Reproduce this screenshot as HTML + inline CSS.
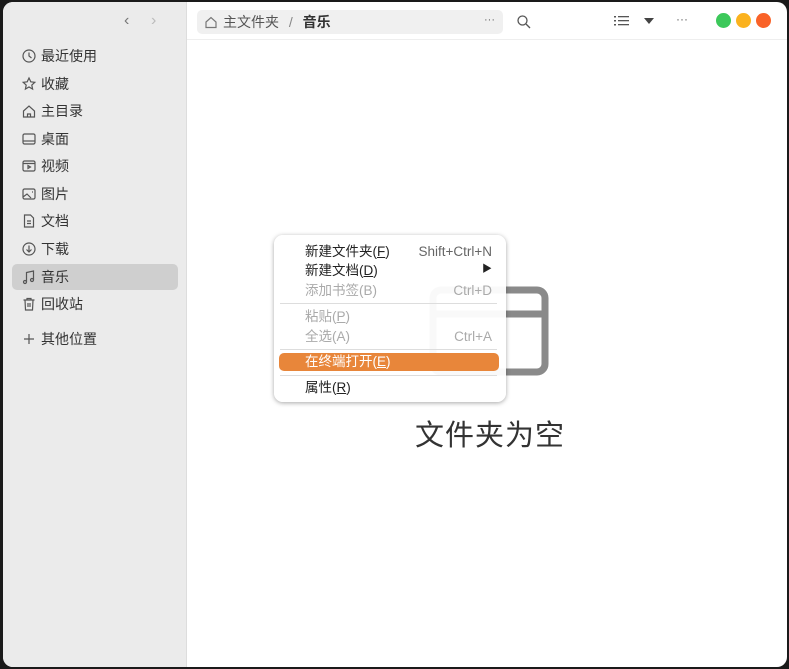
<!DOCTYPE html>
<html><head><meta charset="utf-8"><style>
*{margin:0;padding:0;box-sizing:border-box}
body{width:789px;height:669px;background:#1a1a1a;overflow:hidden;font-family:"Liberation Sans","Noto Sans CJK SC",sans-serif;position:relative}
.win{position:absolute;left:3px;top:2px;width:784px;height:665px;background:#fff;border-radius:10px;overflow:hidden}
.side{position:absolute;left:0;top:0;width:184px;height:100%;background:#ebebeb;border-right:1px solid #ddd}
.item{position:absolute;left:9px;width:166px;height:26px;font-size:14px;color:#333;line-height:26px;padding-left:29px}
.item.sel{background:#cfcfcf;border-radius:5px}
.item svg{position:absolute;left:9px;top:5px}
.top{position:absolute;left:184px;top:0;right:0;height:38px;border-bottom:1px solid #eee}
.crumb{position:absolute;left:10px;top:8px;width:306px;height:24px;background:#f0f0f0;border-radius:5px;font-size:14px;color:#555;line-height:24px;padding-left:26px}
.dot{position:absolute;top:11px;width:15px;height:15px;border-radius:50%}
.menu{position:absolute;left:271px;top:233px;width:232px;height:167px;background:rgba(255,255,255,.95);border-radius:9px;box-shadow:0 1px 5px rgba(0,0,0,.35);font-size:13.5px;color:#222}
.m{position:absolute;left:31px;line-height:18px}
.r{position:absolute;right:14px;line-height:18px}
.g{color:#aaa}
.sep{position:absolute;left:6px;right:9px;height:1px;background:#ddd}
</style></head><body>
<div class="win">
<div class="side">
<div style="position:absolute;left:121px;top:10px;font-size:16px;color:#777">&#8249;</div>
<div style="position:absolute;left:148px;top:10px;font-size:16px;color:#bbb">&#8250;</div>
<div class="item" style="top:41px"><svg width="16" height="16" fill="none" stroke="#555" stroke-width="1.2"><circle cx="8" cy="8" r="6"/><path d="M8 4.5V8l2.5 2"/></svg>最近使用</div>
<div class="item" style="top:69px"><svg width="16" height="16" fill="none" stroke="#555" stroke-width="1.2"><path d="M8 2l1.8 3.8 4 .5-3 2.8.8 4L8 11l-3.6 2.1.8-4-3-2.8 4-.5z"/></svg>收藏</div>
<div class="item" style="top:96px"><svg width="16" height="16" fill="none" stroke="#555" stroke-width="1.2"><path d="M2.5 8L8 3l5.5 5v6h-11z"/><path d="M6.5 14v-3h3v3"/></svg>主目录</div>
<div class="item" style="top:124px"><svg width="16" height="16" fill="none" stroke="#555" stroke-width="1.2"><rect x="2" y="3" width="12" height="10" rx="1.5"/><path d="M2 10h12"/></svg>桌面</div>
<div class="item" style="top:151px"><svg width="16" height="16" fill="none" stroke="#555" stroke-width="1.2"><rect x="2" y="3" width="12" height="10" rx="1.5"/><path d="M2 5.5h12M7 7.5v3l2.5-1.5z"/></svg>视频</div>
<div class="item" style="top:179px"><svg width="16" height="16" fill="none" stroke="#555" stroke-width="1.2"><rect x="2" y="3" width="12" height="10" rx="1.5"/><path d="M2 11l4-3 4 4M11 6h1"/></svg>图片</div>
<div class="item" style="top:206px"><svg width="16" height="16" fill="none" stroke="#555" stroke-width="1.2"><path d="M3.5 2h6l3 3v9h-9z"/><path d="M6 8h4M6 10.5h4"/></svg>文档</div>
<div class="item" style="top:234px"><svg width="16" height="16" fill="none" stroke="#555" stroke-width="1.2"><circle cx="8" cy="8" r="6"/><path d="M8 4.5v6M5.5 8.5L8 11l2.5-2.5"/></svg>下载</div>
<div class="item sel" style="top:262px"><svg width="16" height="16" fill="none" stroke="#555" stroke-width="1.2"><path d="M5.5 13V3.5l7-1.5v9"/><circle cx="4" cy="13" r="1.5"/><circle cx="11" cy="11" r="1.5"/></svg>音乐</div>
<div class="item" style="top:289px"><svg width="16" height="16" fill="none" stroke="#555" stroke-width="1.2"><path d="M2.5 4h11M6 4V2.5h4V4M4 4l.5 10h7L12 4M7 7v4M9 7v4"/></svg>回收站</div>
<div class="item" style="top:324px"><svg width="16" height="16" fill="none" stroke="#555" stroke-width="1.2"><path d="M8 3v10M3 8h10"/></svg>其他位置</div>
</div>
<div class="top">
<div class="crumb"><svg style="position:absolute;left:7px;top:5px" width="14" height="14" fill="none" stroke="#777" stroke-width="1.2"><path d="M2 7L7 2.5 12 7v5.5H2z"/></svg>主文件夹 <span style="color:#888;margin:0 6px">/</span> <b style="color:#333">音乐</b><span style="position:absolute;right:8px;color:#666;font-size:11px;top:-2px">···</span></div>
<svg style="position:absolute;left:329px;top:12px" width="16" height="16" fill="none" stroke="#555" stroke-width="1.3"><circle cx="6.5" cy="6.5" r="4.5"/><path d="M10 10l4 4"/></svg>
<svg style="position:absolute;left:427px;top:13px" width="16" height="12" fill="#555"><rect x="0" y="1" width="2" height="1.5"/><rect x="4" y="1" width="11" height="1.3"/><rect x="0" y="5" width="2" height="1.5"/><rect x="4" y="5" width="11" height="1.3"/><rect x="0" y="9" width="2" height="1.5"/><rect x="4" y="9" width="11" height="1.3"/></svg>
<svg style="position:absolute;left:457px;top:16px" width="10" height="6"><path d="M0 0h10L5 6z" fill="#444"/></svg>
<span style="position:absolute;left:489px;top:10px;font-size:12px;color:#666">···</span>
<div class="dot" style="left:529px;background:#3cc85a"></div>
<div class="dot" style="left:549px;background:#fbb21e"></div>
<div class="dot" style="left:569px;background:#f96228"></div>
</div>
<svg style="position:absolute;left:424px;top:282px" width="122" height="92" fill="none" stroke="#8a8a8a" stroke-width="7"><rect x="6" y="6" width="112" height="82" rx="8"/><path d="M6 30h112"/></svg>
<div style="position:absolute;left:412px;top:410px;font-size:29px;color:#333;letter-spacing:1px">文件夹为空</div>
<div class="menu">
<div class="m" style="top:8px">新建文件夹(<u>F</u>)</div><div class="r" style="top:8px;color:#666">Shift+Ctrl+N</div>
<div class="m" style="top:27px">新建文档(<u>D</u>)</div><div class="r" style="top:26px;font-size:10px">&#9654;</div>
<div class="m g" style="top:47px">添加书签(B)</div><div class="r g" style="top:47px">Ctrl+D</div>
<div class="sep" style="top:68px"></div>
<div class="m g" style="top:73px">粘贴(<u>P</u>)</div>
<div class="m g" style="top:93px">全选(A)</div><div class="r g" style="top:93px">Ctrl+A</div>
<div class="sep" style="top:114px"></div>
<div style="position:absolute;left:5px;top:118px;width:220px;height:18px;background:#e8863a;border-radius:5px"></div>
<div class="m" style="top:118px;color:#fff">在终端打开(<u>E</u>)</div>
<div class="sep" style="top:140px"></div>
<div class="m" style="top:144px">属性(<u>R</u>)</div>
</div>
</div>
</body></html>
